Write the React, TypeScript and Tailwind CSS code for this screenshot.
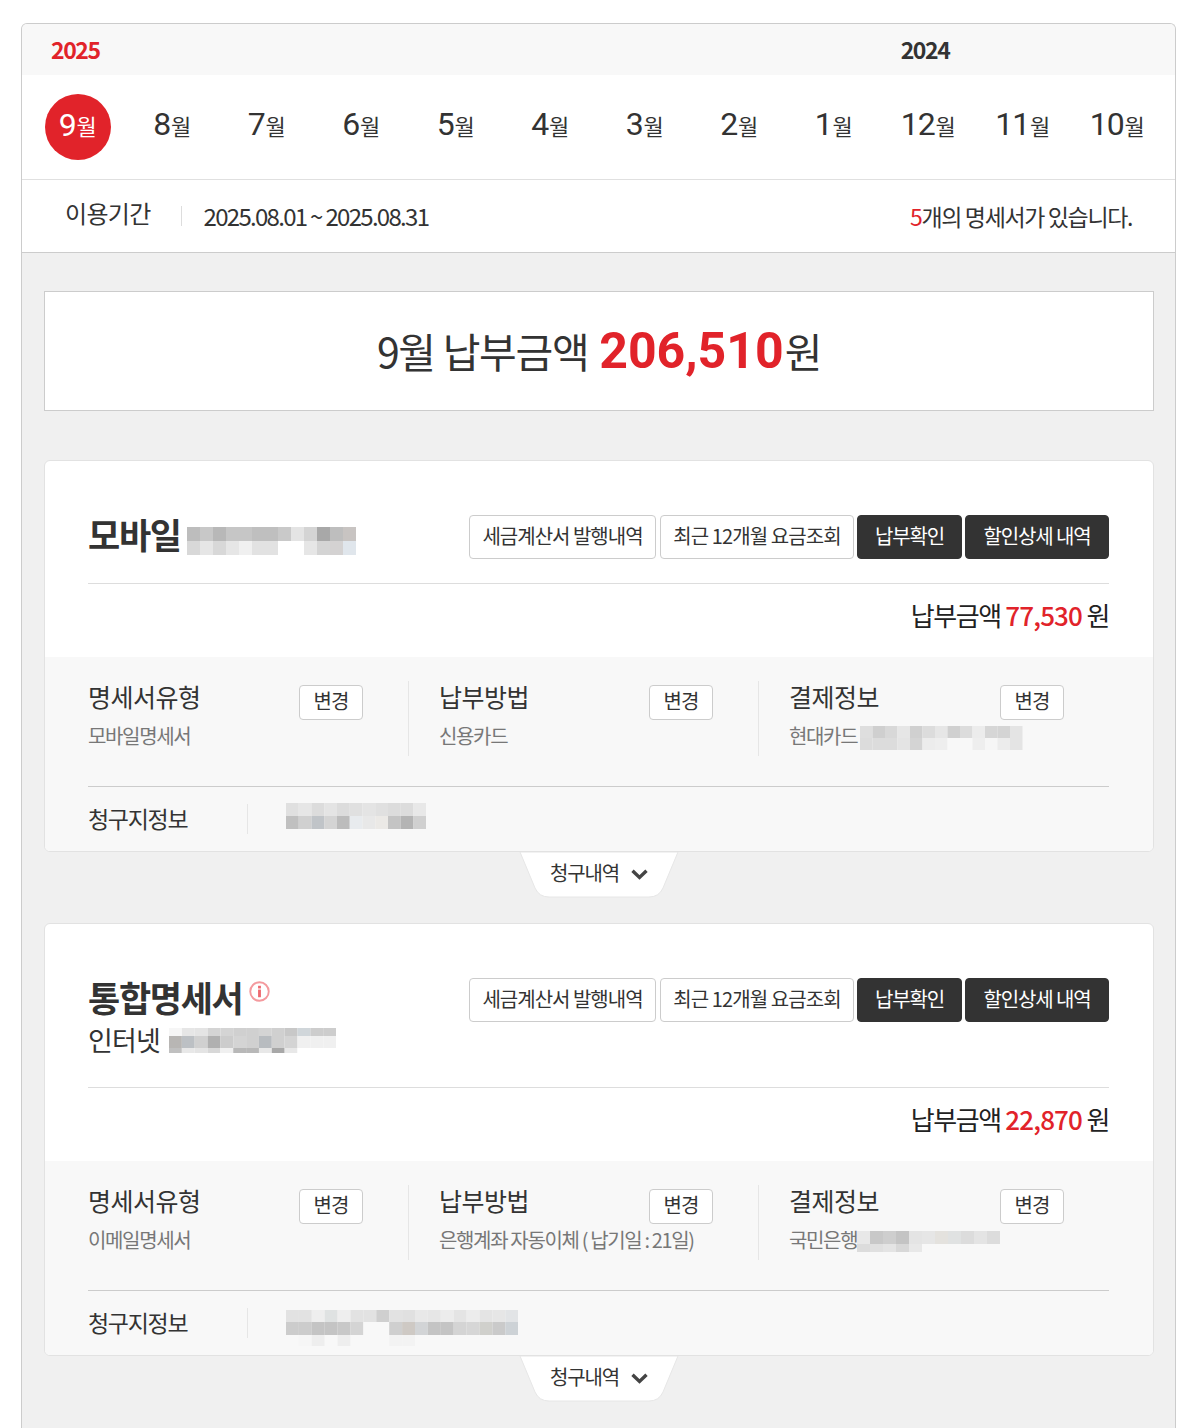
const months = [
  ['9', true],
  ['8'],
  ['7'],
  ['6'],
  ['5'],
  ['4'],
  ['3'],
  ['2'],
  ['1'],
  ['12'],
  ['11'],
  ['10'],
] as [string, boolean?][]

// blurred-out account numbers: one row of hex colours per band
const Mosaic = ({ rows, heights, className = '', cell = 13 }: { rows: string[][]; heights: number[]; className?: string; cell?: number }) => {
  const w = Math.max(...rows.map((r) => r.length)) * cell
  const h = heights.reduce((a, b) => a + b, 0)
  let y = 0
  return (
    <svg width={w} height={h} className={`block shrink-0 ${className}`}>
      {rows.map((r, i) => {
        const top = y
        y += heights[i]
        return r.map((c, j) => <rect key={`${i}-${j}`} x={j * cell} y={top} width={cell} height={heights[i]} fill={c} />)
      })}
    </svg>
  )
}

const Outline = ({ label, w, track }: { label: string; w: string; track: string }) => (
  <button className={`h-11 pb-[3px] ${w} bg-white border border-[#ccc] rounded-[4px] text-[20px] ${track} text-[#333] whitespace-nowrap`}>
    {label}
  </button>
)

const Dark = ({ label, w }: { label: string; w: string }) => (
  <button className={`h-11 pb-[3px] ${w} bg-[#333] border border-[#333] rounded-[4px] text-[20px] tracking-[-1.1px] text-white whitespace-nowrap`}>
    {label}
  </button>
)

const Actions = () => (
  <div className="flex gap-[3px]">
    <Outline label="세금계산서 발행내역" w="w-[187px] mr-px" track="tracking-[-1px]" />
    <Outline label="최근 12개월 요금조회" w="w-[194px]" track="tracking-[-0.9px]" />
    <Dark label="납부확인" w="w-[105px]" />
    <Dark label="할인상세 내역" w="w-[144px]" />
  </div>
)

const Info = ({ title, children, w, first, last }: { title: string; children: React.ReactNode; w: string; first?: boolean; last?: boolean }) => (
  <div className={`${w} h-[75px] ${last ? '' : 'border-r border-[#e6e6e6]'} ${first ? '' : 'pl-[30px]'}`}>
    <div className="flex justify-between pr-[45px]">
      <div className="-mt-px text-[25px] leading-[32px] tracking-[-0.5px] text-[#333]">{title}</div>
      <button className="mt-1 w-16 h-[35px] pb-[3px] bg-white border border-[#ccc] rounded-[4px] text-[20px] tracking-[-1px] text-[#333]">변경</button>
    </div>
    <div className="mt-[3px] h-[26px] flex items-center text-[20px] tracking-[-1.35px] text-[#777] whitespace-nowrap">{children}</div>
  </div>
)

const Tab = () => (
  <div className="relative w-[160px] h-[46px] mx-auto flex items-center justify-center gap-[12px] pb-[4px]">
    <svg width="160" height="46" viewBox="0 0 160 46" className="absolute inset-0">
      <path d="M1 0 L16 36 Q20 45 30 45 L130 45 Q140 45 144 36 L159 0 Z" fill="#fff" stroke="#e6e6e6" />
    </svg>
    <span className="relative text-[20px] tracking-[-1.2px] text-[#333]">청구내역</span>
    <svg width="17" height="11" viewBox="0 0 17 11" className="relative mt-[3px]" fill="none">
      <path d="M1.5 1.8 L8.5 8.5 L15.5 1.8" stroke="#444" strokeWidth="3.4" />
    </svg>
  </div>
)

const Card = ({ head, amount, type, method, pay, addr, tall }: { head: React.ReactNode; amount: string; type: string; method: string; pay: React.ReactNode; addr: React.ReactNode; tall?: boolean }) => (
  <div className="bg-white border border-[#e2e2e2] rounded-[6px] overflow-hidden">
    <div className="pl-[43px] pr-[44px]">
      <div className={`${tall ? 'h-[164px]' : 'h-[123px]'} pt-[54px] flex justify-between items-start border-b border-[#ddd]`}>
        {head}
        <Actions />
      </div>
      <div className="h-[73px] pb-[12px] flex items-center justify-end text-[26px] tracking-[-1.4px] text-[#222]">
        납부금액&nbsp;<span className="text-[#e1232a] font-medium tracking-[-0.85px]">{amount}</span>&nbsp;원
      </div>
    </div>
    <div className="bg-[#f8f8f8] pl-[43px] pr-[44px]">
      <div className="pt-6 h-[130px] border-b border-[#ccc] flex">
        <Info title="명세서유형" w="w-[321px]" first>{type}</Info>
        <Info title="납부방법" w="w-[350px]">{method}</Info>
        <Info title="결제정보" w="w-[350px]" last>{pay}</Info>
      </div>
      <div className="h-[64px] pt-[17px] flex">
        <div className="w-[160px] h-[30px] border-r border-[#e6e6e6] text-[23px] leading-[28px] tracking-[-1.3px] text-[#333]">청구지정보</div>
        <div className="pl-[38px] -mt-px">{addr}</div>
      </div>
    </div>
  </div>
)

export default function App() {
  return (
    <div className="w-[1197px] h-[1428px] overflow-hidden bg-white pt-[23px] pl-[21px] font-['Noto_Sans_CJK_KR','Noto_Sans',sans-serif]">
      <div className="w-[1155px] h-[1405px] border border-b-0 border-[#ccc] rounded-t-[6px] bg-[#f0f0f0] overflow-hidden">
        <div className="h-[51px] bg-[#f8f8f8] flex items-center text-[23px] font-bold tracking-[-1.4px]">
          <span className="ml-[29px] text-[#e1232a]">2025</span>
          <span className="ml-[801px] text-[#333]">2024</span>
        </div>
        <div className="h-[105px] bg-white border-b border-[#e0e0e0] grid grid-cols-12 pl-[8.5px] pr-[10.5px] items-center">
          {months.map(([m, on]) => (
            <div key={m} className="flex justify-center">
              <div className={`flex justify-center ${on ? 'w-[66px] h-[66px] -mt-px pb-[4px] rounded-full bg-[#e1232a] text-white items-center' : '-mt-[7px] items-baseline text-[#333]'}`}>
                <span className="text-[32px] leading-[38px] tracking-[-1px] font-['Roboto','Noto_Sans',sans-serif]">{m}</span>
                <span className="text-[22px] leading-[30px] ml-[1px]">월</span>
              </div>
            </div>
          ))}
        </div>
        <div className="h-[73px] bg-white border-b border-[#ccc] flex items-center pl-[43px] pr-[43px]">
          <span className="text-[24px] tracking-[-0.7px] text-[#333] -mt-[6px]">이용기간</span>
          <span className="w-px h-5 bg-[#ddd] ml-[30px]" />
          <span className="ml-[22px] text-[24px] tracking-[-1.7px] text-[#333]">2025.08.01 ~ 2025.08.31</span>
          <span className="ml-auto text-[23px] tracking-[-1.37px] text-[#333]">
            <span className="text-[#e1232a]">5</span>개의 명세서가 있습니다.
          </span>
        </div>
        <div className="pl-[22px] pr-[21px] pt-[38px]">
          <div className="h-[120px] bg-white border border-[#ccc] flex items-center justify-center text-[41px] tracking-[-1.3px] text-[#333]">
            9월 납부금액&nbsp;<span className="ml-[3px] mr-px text-[#e1232a] font-bold text-[50px] tracking-[0px] font-['Roboto',sans-serif]">206,510</span>원
          </div>
          <div className="h-[49px]" />
          <Card
            head={
              <div className="flex items-center -mt-[5px]">
                <span className="text-[35px] leading-[48px] font-bold tracking-[-1.3px] text-[#333]">모바일</span>
                <Mosaic
                  className="ml-[6px] mt-[14px]"
                  heights={[14, 14]}
                  rows={[
                    ['#bdbdbd', '#c8c8c8', '#b8b8b8', '#c6c6c6', '#c6c6c6', '#bfbfbf', '#bfbfbf', '#c9c9c9', '#e4e4e4', '#d4d4d4', '#a8a8a8', '#bebebe', '#c8c4c2'],
                    ['#d8d8d8', '#e6e6e6', '#d8d8d8', '#e6e6e6', '#f0f0f0', '#e2e2e2', '#e2e2e2', '#ffffff', '#ffffff', '#e6e6e6', '#d4d4d4', '#d4d2d2', '#e0e6ec'],
                  ]}
                />
              </div>
            }
            amount="77,530"
            type="모바일명세서"
            method="신용카드"
            pay={
              <>
                현대카드
                <Mosaic
                  className="ml-[3px] mt-[3px]"
                  cell={12.5}
                  heights={[12, 12]}
                  rows={[
                    ['#dedede', '#cfcfcf', '#d8d8d8', '#e6e6e6', '#d0d0d0', '#dcdcdc', '#e6e6e6', '#d0d0d0', '#dcdcdc', '#ececec', '#d6d6d6', '#d4d4d4', '#e4e4e4'],
                    ['#dcdcdc', '#dcdcdc', '#dcdcdc', '#e4e4e4', '#d4d4d4', '#ececec', '#eeeeee', '#f8f8f8', '#f8f8f8', '#eeeeee', '#f6f6f6', '#ececec', '#e4e4e4'],
                  ]}
                />
              </>
            }
            addr={
              <Mosaic
                heights={[13, 13]}
                cell={12.75}
                rows={[
                  ['#e0e0e0', '#e6e6e6', '#dcdcdc', '#e4e4e4', '#dcdcdc', '#e0e0e0', '#e4e4e4', '#e0e0e0', '#dcdcdc', '#dcdcdc', '#e8e8e8'],
                  ['#c0c0c0', '#d0d0d0', '#c0c4c8', '#d4d4d4', '#bcbcbc', '#e8ebee', '#e8e8e8', '#ebe9e6', '#c4c4c4', '#b4b4b4', '#d0d0d0'],
                ]}
              />
            }
          />
          <div className="h-[71px]"><Tab /></div>
          <Card
            tall
            head={
              <div className="-mt-[5px]">
                <div className="flex items-start">
                  <span className="text-[35px] leading-[48px] font-bold tracking-[-1.3px] text-[#333]">통합명세서</span>
                  <svg width="21" height="21" viewBox="0 0 22 22" className="ml-[6px] mt-[8px]" fill="none">
                    <circle cx="11" cy="11" r="9.7" stroke="#f49a9e" strokeWidth="2" />
                    <rect x="9.5" y="9" width="3" height="8" fill="#ee6a71" />
                    <rect x="9.5" y="5" width="3" height="2.8" fill="#ee6a71" />
                  </svg>
                </div>
                <div className="flex items-start mt-px">
                  <span className="text-[27px] leading-[36px] tracking-[-0.8px] text-[#333]">인터넷</span>
                  <Mosaic
                    className="ml-[9px] mt-[6px]"
                    cell={12.85}
                    heights={[8, 12, 5]}
                    rows={[
                      ['#f6f6f6', '#e6e6e6', '#e4e4e4', '#d4d4d4', '#d4d4d4', '#d0d0d0', '#d0d0d0', '#d4d4d4', '#d0d0d0', '#c8c8c8', '#d0d6da', '#cdcdcd', '#cdcdcd'],
                      ['#b8b6b4', '#bcc0c4', '#d0d0d0', '#b0b0b0', '#cccccc', '#d4d4d4', '#d0d0d0', '#b8bcc0', '#d0d0d0', '#d4d4d4', '#f0f0f0', '#f0f0f0', '#f0f0f0'],
                      ['#c0c0c0', '#e8e8e8', '#e4e4e4', '#d8d8d8', '#f0f0f0', '#b8b8b8', '#b8b8b8', '#e8e8e8', '#a8a8a8', '#e8e8e8', '#ffffff', '#ffffff', '#ffffff'],
                    ]}
                  />
                </div>
              </div>
            }
            amount="22,870"
            type="이메일명세서"
            method="은행계좌 자동이체 ( 납기일 : 21일)"
            pay={
              <>
                국민은행
                <Mosaic
                  className="mt-[3px]"
                  heights={[13, 8]}
                  rows={[
                    ['#e8e8e8', '#c8c8c8', '#cecece', '#c4c4c4', '#e4e4e4', '#e6e6e6', '#e4e2de', '#e0e2e2', '#dcdcdc', '#e4e4e4', '#dcdcdc'],
                    ['#dcdcdc', '#e0e0e0', '#e4e4e4', '#d8d8d8', '#e8e8e8', '#f8f8f8', '#f8f8f8', '#f8f8f8', '#f8f8f8', '#f8f8f8', '#f8f8f8'],
                  ]}
                />
              </>
            }
            addr={
              <Mosaic
                className="mt-[3px]"
                cell={12.9}
                heights={[12, 13, 11]}
                rows={[
                  ['#e2e2e2', '#e2e2e2', '#eeeeee', '#dfe2e2', '#eeeeee', '#e2e2e2', '#e2e2e2', '#cfcfcf', '#e2e2e2', '#e0e0e0', '#e8e8e8', '#e6e6e6', '#ececec', '#e4e4e4', '#ececec', '#e4e4e4', '#e6e6e6', '#e2e4e6'],
                  ['#cccccc', '#cccccc', '#c4c4c4', '#c4c4c4', '#c8c8c8', '#d4d4d4', '#f8f8f8', '#f8f8f8', '#cfcfcf', '#cec9c4', '#d2d4d6', '#c4c4c4', '#c4c4c4', '#d4d4d4', '#d6d6d6', '#d0d0cc', '#cacaca', '#cdd2d6'],
                  ['#f8f8f8', '#f6f6f6', '#eeeeee', '#f8f8f8', '#eeeeee', '#f8f8f8', '#f8f8f8', '#f8f8f8', '#f3f3f3', '#f3f3f3', '#f8f8f8', '#f8f8f8', '#f8f8f8', '#f8f8f8', '#f8f8f8', '#f8f8f8', '#f8f8f8', '#f8f8f8'],
                ]}
              />
            }
          />
          <Tab />
        </div>
      </div>
    </div>
  )
}
